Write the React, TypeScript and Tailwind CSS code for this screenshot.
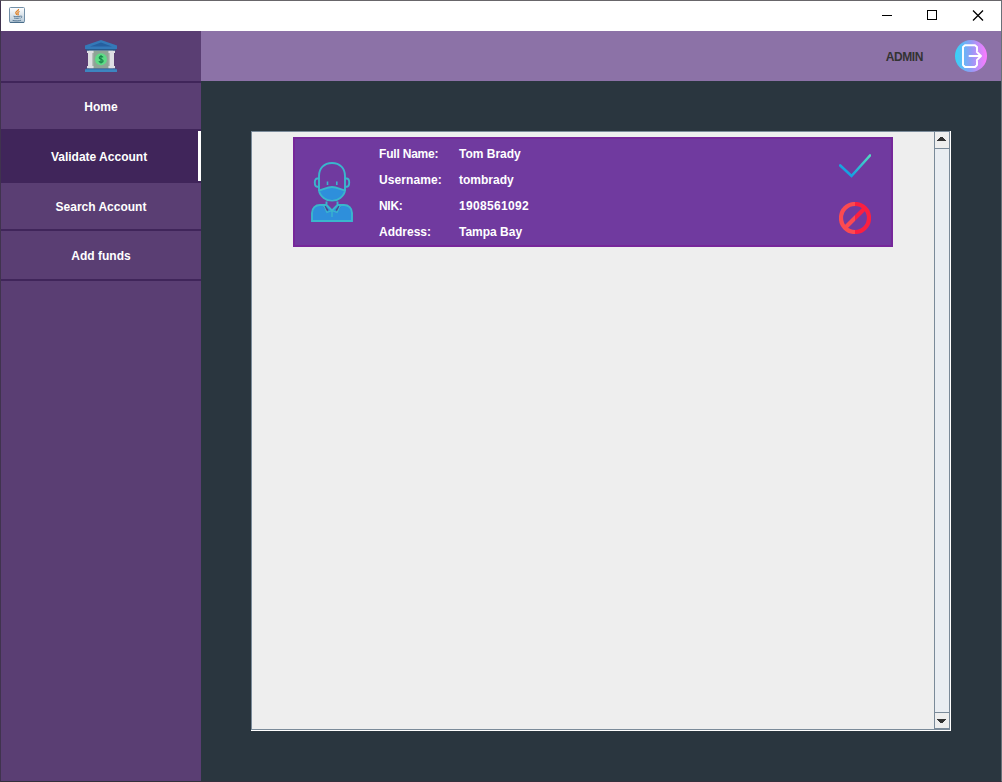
import type { ReactNode } from "react";

function JavaIcon() {
  return (
    <svg width="16" height="16" viewBox="0 0 16 16">
      <defs>
        <linearGradient id="cup" x1="0" y1="0" x2="0" y2="1">
          <stop offset="0" stopColor="#ffffff" />
          <stop offset="1" stopColor="#b9cad8" />
        </linearGradient>
      </defs>
      <rect x="0.5" y="0.5" width="15" height="15" rx="1" fill="url(#cup)" stroke="#7390a8" />
      <path d="M1 15.4h14" stroke="#456a87" />
      <path d="M9.500 2c.8 1.700-3.500 2.400-2.700 4 .3.700 1 1.200.8 2M10.600 4.500c-1.300.5-2.300 1.200-1.500 2.300.4.600 0 1.100-.5 1.400" fill="none" stroke="#e08228" strokeWidth="1.300" />
      <path d="M4.500 9.200c2 .7 5 .6 7-.1M5 11c1.800.5 4 .5 5.600 0M3.600 13.400c3 .7 6.500.6 8.500-.2M11.500 9.200c1.800-.5 1.900 1.300 0 2" fill="none" stroke="#4f728e" strokeWidth=".9" />
    </svg>
  );
}

function BankIcon() {
  return (
    <svg width="32" height="32" viewBox="0 0 32 32">
      <path d="M4 10h24v18.500H4z" fill="#a9b0ab" />
      <path d="M8.500 11h15v17.500h-15z" fill="#8fa496" />
      <path d="M2 10.500h6.500V13H7.300v13h1.200v2.500H2V26h1V13H2zM23.500 10.500H30V13h-1v13h1v2.500h-6.500V26h1.200V13h-1.200z" fill="#dedee2" />
      <path d="M16 0 32 5.500V9H0V5.500z" fill="#3479b8" />
      <path d="M16 2.500 27 6.500H5z" fill="#265f9f" />
      <path d="M1 9h30v1.500H1z" fill="#285b8c" />
      <path d="M1 28.500h30V30H1z" fill="#285f96" />
      <path d="M0 29.300h32V32H0z" fill="#3d85c0" />
      <circle cx="16" cy="19.300" r="6" fill="#5edb86" />
      <path d="M18 17.400c-.3-1.400-3.700-1.500-3.800.3 0 1.900 3.900 1.300 3.900 3.300 0 1.800-3.800 1.800-4.100.1M16 15v8.600" fill="none" stroke="#16874a" strokeWidth="1.200" />
    </svg>
  );
}

function LogoutIcon() {
  return (
    <svg width="32" height="32" viewBox="0 0 32 32">
      <defs>
        <linearGradient id="exit">
          <stop offset="0" stopColor="#32d5f7" />
          <stop offset=".5" stopColor="#929cf5" />
          <stop offset="1" stopColor="#ff79ff" />
        </linearGradient>
      </defs>
      <circle cx="16" cy="16" r="16" fill="url(#exit)" />
      <path d="M22 10.500V7l-2-1.700H10L8 7v18l2 2h10l2-2v-3.500M14.500 16h11.300M21.800 11.800 26 16l-4.200 4.200" fill="none" stroke="#fff" strokeWidth="1.900" strokeLinejoin="round" strokeLinecap="round" />
    </svg>
  );
}

function PersonIcon() {
  return (
    <svg width="42" height="60" viewBox="0 0 42 60" fill="none" stroke="#3ab6cd" strokeWidth="1.900">
      <path d="M8 16.500H6.500c-1.700 0-2.700 1.300-2.700 4s1.100 4.300 2.900 4.300H8M34 16.500h1.500c1.700 0 2.700 1.300 2.700 4s-1.100 4.300-2.900 4.300H34" />
      <path d="M8 28.500V14C8 6.500 13 1 21 1s13 5.500 13 13v14.500" />
      <path d="M8 28.500c4-.6 8-3.500 13-3.500s9 2.900 13 3.500c-.7 5.800-7.500 10.500-13 10.500S8.700 34.300 8 28.500z" fill="#2e8fdb" />
      <path d="M16.500 19.500V23M25.800 19.500V23" strokeWidth="1.600" />
      <path d="M1 59v-8c0-5 3.500-8 8-8h24c4.500 0 8 3 8 8v8z" fill="#2e8fdb" />
      <path d="M15.500 39.500V43l5.500 5.500 5.500-5.500v-3.500" fill="#703a9f" />
      <path d="m13.500 44.500 3 4.300M28.500 44.500l-3 4.300" stroke="#4a4588" strokeWidth="2.400" />
      <path d="m12.500 43.500 3.500 7 5-2 5 2 3.500-7M21 48v7" strokeWidth="1.300" />
    </svg>
  );
}

function CheckIcon() {
  return (
    <svg width="32" height="24" viewBox="0 0 32 24">
      <defs>
        <linearGradient id="check" x1="0" y1="1" x2="1" y2="0">
          <stop offset=".2" stopColor="#14a1e2" />
          <stop offset="1" stopColor="#52dbc0" />
        </linearGradient>
      </defs>
      <path d="M1.200 11.500 12.500 22 31 1.500" fill="none" stroke="url(#check)" strokeWidth="2.600" strokeLinecap="round" />
    </svg>
  );
}

function BlockIcon() {
  return (
    <svg width="32" height="32" viewBox="0 0 32 32">
      <defs>
        <linearGradient id="ban" gradientUnits="userSpaceOnUse" x1="0" y1="0" x2="32" y2="0">
          <stop offset=".5" stopColor="#fc4a50" />
          <stop offset=".5" stopColor="#fb1f40" />
        </linearGradient>
      </defs>
      <path d="M16 2a14 14 0 1 1 0 28 14 14 0 0 1 0-28M6.200 25.800 25.800 6.200" fill="none" stroke="url(#ban)" strokeWidth="4.200" />
    </svg>
  );
}

function MenuItem({ children, className = "" }: { children: ReactNode; className?: string }) {
  return (
    <button className={`flex w-full shrink-0 items-center justify-center border-b-2 border-[#40255a] bg-[#5a3e73] pt-[2px] ${className}`}>
      {children}
    </button>
  );
}

const account = [
  { label: "Full Name:", value: "Tom Brady", labelClass: "tracking-[-0.2px]", valueClass: "" },
  { label: "Username:", value: "tombrady", labelClass: "tracking-[0.1px]", valueClass: "" },
  { label: "NIK:", value: "1908561092", labelClass: "tracking-[-0.3px]", valueClass: "tracking-[0.33px]" },
  { label: "Address:", value: "Tampa Bay", labelClass: "", valueClass: "" },
];

export default function App() {
  return (
    <div className="flex h-[782px] w-[1002px] flex-col border border-t-[#68666a] border-r-[#687078] border-b-[#33303d] border-l-[#40334e] bg-white font-['Liberation_Sans',sans-serif] text-xs font-bold text-white">
      <header className="flex h-[30px] shrink-0 items-center justify-between pl-2">
        <div className="-mt-[2px]"><JavaIcon /></div>
        <svg width="138" height="30" viewBox="0 0 138 30" fill="none" stroke="#000" shapeRendering="crispEdges">
          <path d="M19 14.500h10" />
          <path d="M64.500 9.500h9v9h-9z" />
          <path d="m110 9.500 10 10M120 9.500l-10 10" shapeRendering="auto" strokeWidth="1.300" />
        </svg>
      </header>
      <div className="flex min-h-0 flex-1">
        <nav className="flex w-[200px] shrink-0 flex-col bg-[#5a3e73]">
          <div className="flex h-[52px] shrink-0 items-center justify-center border-b-2 border-[#40255a]"><BankIcon /></div>
          <MenuItem className="h-12">Home</MenuItem>
          <div className="flex h-[52px] shrink-0 items-center bg-[#40255a]">
            <button className="w-[196px] text-center">Validate Account</button>
            <span className="mb-[2px] ml-px h-[50px] w-[3px] bg-white" />
          </div>
          <MenuItem className="h-12">Search Account</MenuItem>
          <MenuItem className="h-[50px]">Add funds</MenuItem>
        </nav>
        <main className="flex min-w-0 flex-1 flex-col bg-[#2a363f]">
          <div className="flex h-[50px] shrink-0 items-center justify-end gap-8 bg-[#8c72a7] pr-[14px]">
            <span className="pt-[2px] tracking-[-0.4px] text-[#333333]">ADMIN</span>
            <LogoutIcon />
          </div>
          <section className="mt-[50px] ml-[50px] flex h-[600px] w-[700px] border-r border-b border-white">
            <div className="flex flex-1 border border-[#7a8a99] bg-[#eeeeee]">
              <div className="flex flex-1 pt-[5px] pl-[41px]">
                <article className="flex h-[110px] w-[600px] items-center border-2 border-[#76279a] bg-[#703a9f]">
                  <div className="ml-4 w-[68px]"><PersonIcon /></div>
                  <dl className="mt-[1px] grid flex-1 grid-cols-[80px_1fr] auto-rows-[26px] items-center">
                    {account.map((row) => (
                      <div key={row.label} className="contents">
                        <dt className={row.labelClass}>{row.label}</dt>
                        <dd className={row.valueClass}>{row.value}</dd>
                      </div>
                    ))}
                  </dl>
                  <div className="flex w-[52px] flex-col gap-6 pt-[4px]"><CheckIcon /><BlockIcon /></div>
                </article>
              </div>
              <div className="flex w-[15px] flex-col border-l border-[#7a8a99] bg-[#e9edf2]">
                <div className="flex h-[17px] items-center justify-center border-b border-[#7a8a99] bg-[#eeeeee] pb-[2px]">
                  <svg width="9" height="4" className="-ml-px" shapeRendering="crispEdges"><path d="M0 3h9v1H0zM1 2h7v1H1zM2 1h5v1H2zM3 0h3v1H3z" fill="#333" /></svg>
                </div>
                <div className="flex-1" />
                <div className="flex h-[17px] items-center justify-center border-y border-[#7a8a99] bg-[#eeeeee]">
                  <svg width="9" height="4" className="-ml-px" shapeRendering="crispEdges"><path d="M0 0h9v1H0zM1 1h7v1H1zM2 2h5v1H2zM3 3h3v1H3z" fill="#333" /></svg>
                </div>
              </div>
            </div>
          </section>
        </main>
      </div>
    </div>
  );
}
